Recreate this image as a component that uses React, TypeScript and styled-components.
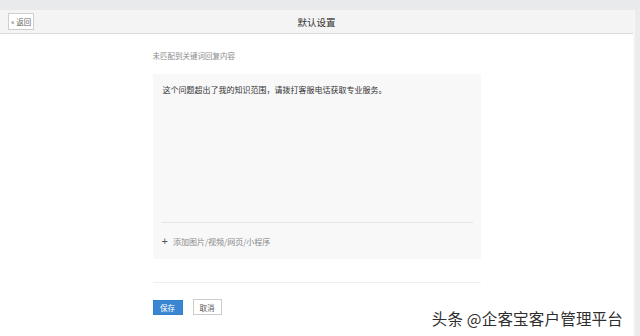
import React from "react";
import styled, { createGlobalStyle } from "styled-components";

const GlobalStyle = createGlobalStyle`
  html, body {
    margin: 0;
    padding: 0;
    background: #ffffff;
  }
  body {
    font-family: "Liberation Sans", "Noto Sans CJK SC", sans-serif;
    color: #333;
  }
`;

const Page = styled.div`
  position: relative;
  width: 640px;
  height: 336px;
  overflow: hidden;
  display: flex;
  flex-direction: column;
  background: #e9eaec;
`;

const Frame = styled.div`
  flex: 1;
  display: flex;
  margin-top: 10px;
`;

const Main = styled.div`
  width: 633px;
  display: flex;
  flex-direction: column;
  background: #ffffff;
`;

const Scroll = styled.div`
  flex: 1;
  border-left: 2px solid #f6f6f7;
  background: #ececee;
`;

const Header = styled.div`
  height: 23px;
  display: grid;
  grid-template-columns: 1fr auto 1fr;
  align-items: center;
  padding: 0 8px;
  background: #f4f4f4;
  border-bottom: 1px solid #dcdcdc;
`;

const BackButton = styled.button`
  justify-self: start;
  height: 17px;
  padding: 0 2px;
  border: 1px solid #cfcfcf;
  background: #ffffff;
  color: #666;
  font-family: "Noto Sans CJK SC", sans-serif;
  font-size: 7.5px;
  line-height: 15px;
  cursor: pointer;
`;

const Title = styled.div`
  font-family: "Noto Sans CJK SC", sans-serif;
  font-size: 9.5px;
  color: #333;
`;

const Body = styled.div`
  width: 328px;
  margin: 0 auto;
  padding-top: 16px;
  display: flex;
  flex-direction: column;
`;

const Label = styled.div`
  font-family: "Noto Sans CJK SC", sans-serif;
  font-size: 7.5px;
  line-height: 12px;
  color: #8a8a8a;
`;

const Editor = styled.div`
  margin-top: 12px;
  height: 185px;
  background: #f8f8f8;
  display: flex;
  flex-direction: column;
  padding: 0 8px 0 8px;
`;

const Content = styled.div`
  flex: 1;
  padding: 10px 2px 0;
  font-family: "Noto Sans CJK SC", sans-serif;
  font-size: 8px;
  line-height: 12px;
  color: #333;
  border-bottom: 1px solid #e6e6e6;
`;

const AddMedia = styled.div`
  height: 36px;
  display: flex;
  align-items: center;
  gap: 5px;
  padding-left: 1px;
  font-family: "Noto Sans CJK SC", sans-serif;
  font-size: 8px;
  color: #888;
`;

const Plus = styled.span`
  font-family: "Liberation Sans", sans-serif;
  font-size: 11px;
  color: #555;
`;

const Divider = styled.div`
  margin-top: 23px;
  height: 1px;
  background: #eeeeee;
`;

const Actions = styled.div`
  margin-top: 16px;
  display: flex;
  align-items: center;
  gap: 10px;
`;

const Button = styled.button<{ primary?: boolean }>`
  height: ${(p) => (p.primary ? "15px" : "16px")};
  width: ${(p) => (p.primary ? "30px" : "29px")};
  padding: 0;
  font-family: "Noto Sans CJK SC", sans-serif;
  font-size: 7.5px;
  cursor: pointer;
  border: 1px solid ${(p) => (p.primary ? "#3380cc" : "#cccccc")};
  background: ${(p) => (p.primary ? "#3a86d2" : "#ffffff")};
  color: ${(p) => (p.primary ? "#ffffff" : "#555")};
`;

const Watermark = styled.div`
  position: absolute;
  right: 17px;
  bottom: 7px;
  font-family: "Noto Sans CJK SC", sans-serif;
  font-size: 15.5px;
  color: #2e2e2e;
  letter-spacing: 0.2px;
  text-shadow: 0 0 2px #ffffff;
`;

export default function App() {
  return (
    <>
      <GlobalStyle />
      <Page>
        <Frame>
          <Main>
            <Header>
              <BackButton>« 返回</BackButton>
              <Title>默认设置</Title>
              <span />
            </Header>
            <Body>
              <Label>未匹配到关键词回复内容</Label>
              <Editor>
                <Content>这个问题超出了我的知识范围，请拨打客服电话获取专业服务。</Content>
                <AddMedia>
                  <Plus>+</Plus>
                  添加图片/视频/网页/小程序
                </AddMedia>
              </Editor>
              <Divider />
              <Actions>
                <Button primary>保存</Button>
                <Button>取消</Button>
              </Actions>
            </Body>
          </Main>
          <Scroll />
        </Frame>
        <Watermark>头条 @企客宝客户管理平台</Watermark>
      </Page>
    </>
  );
}
